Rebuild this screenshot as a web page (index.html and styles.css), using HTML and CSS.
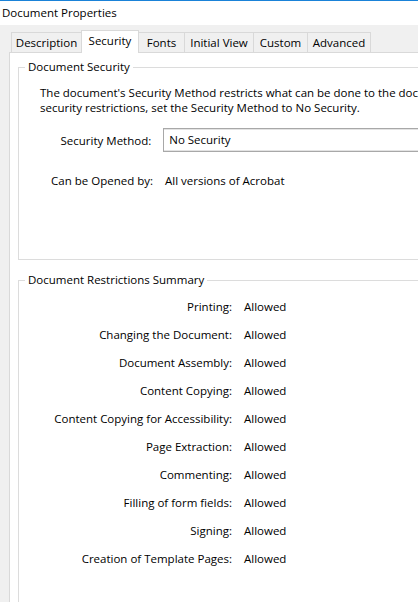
FILE: index.html
```html
<!DOCTYPE html>
<html>
<head>
<meta charset="utf-8">
<link rel="stylesheet" href="styles.css">
</head>
<body>
<div class="window">
  <div class="titlebar">Document Properties</div>
  <div class="tabs">
    <div class="tab t-desc">Description</div>
    <div class="tab t-sec active">Security</div>
    <div class="tab t-fonts">Fonts</div>
    <div class="tab t-init">Initial View</div>
    <div class="tab t-custom">Custom</div>
    <div class="tab t-adv">Advanced</div>
  </div>
  <div class="panel">
    <fieldset class="group group-security">
      <legend>Document Security</legend>
      <p class="desc">The document's Security Method restricts what can be done to the document. To remove<br>security restrictions, set the Security Method to No Security.</p>
      <div class="method-row">
        <span class="label">Security Method:</span>
        <div class="combo">No Security</div>
      </div>
      <div class="opened-row">
        <span class="label">Can be Opened by:</span>
        <span class="value">All versions of Acrobat</span>
      </div>
    </fieldset>
    <fieldset class="group group-summary">
      <legend>Document Restrictions Summary</legend>
      <div class="summary">
        <span class="s-label">Printing:</span><span class="s-value">Allowed</span>
        <span class="s-label">Changing the Document:</span><span class="s-value">Allowed</span>
        <span class="s-label">Document Assembly:</span><span class="s-value">Allowed</span>
        <span class="s-label">Content Copying:</span><span class="s-value">Allowed</span>
        <span class="s-label">Content Copying for Accessibility:</span><span class="s-value">Allowed</span>
        <span class="s-label">Page Extraction:</span><span class="s-value">Allowed</span>
        <span class="s-label">Commenting:</span><span class="s-value">Allowed</span>
        <span class="s-label">Filling of form fields:</span><span class="s-value">Allowed</span>
        <span class="s-label">Signing:</span><span class="s-value">Allowed</span>
        <span class="s-label">Creation of Template Pages:</span><span class="s-value">Allowed</span>
      </div>
    </fieldset>
  </div>
</div>
</body>
</html>
```

FILE: styles.css
```css
html, body {
  margin: 0;
  padding: 0;
}
body {
  width: 418px;
  height: 602px;
  overflow: hidden;
  background: #f0f0f0;
  font-family: "Open Sans", "Noto Sans", sans-serif;
  font-size: 11.5px;
  color: #000;
}
.window {
  width: 560px;
}
.titlebar {
  height: 24px;
  border-top: 1px solid #1a82d8;
  background: #fff;
  padding-left: 2px;
  line-height: 24px;
  white-space: nowrap;
}
.tabs {
  display: flex;
  height: 20px;
  margin-top: 7px;
  padding-left: 11px;
}
.tab {
  box-sizing: border-box;
  height: 20px;
  border: 1px solid #d9d9d9;
  border-bottom: none;
  margin-left: -1px;
  text-align: center;
  line-height: 19px;
  white-space: nowrap;
}
.tab:first-child { margin-left: 0; }
.t-desc { width: 71px; }
.t-sec { width: 58px; }
.t-fonts { width: 47px; }
.t-init { width: 70px; }
.t-custom { width: 55px; }
.t-adv { width: 64px; }
.tab.active {
  position: relative;
  z-index: 1;
  background: #fff;
  height: 23px;
  margin-top: -2px;
  line-height: 20px;
}
.panel {
  box-sizing: border-box;
  margin-left: 9px;
  height: 560px;
  background: #fff;
  border: 1px solid #d9d9d9;
  padding: 6px 0 0 8px;
}
.group {
  margin: 0;
  padding: 0;
  border: 1px solid #dcdcdc;
  min-width: 0;
}
.group legend {
  margin-left: 6px;
  padding: 0 3px;
  line-height: 16px;
}
.group-security {
  height: 201px;
  box-sizing: border-box;
}
.desc {
  margin: 10px 0 0 21px;
  line-height: 15px;
  white-space: nowrap;
}
.method-row {
  display: flex;
  align-items: center;
  margin-top: 13px;
}
.label {
  width: 134px;
  text-align: right;
  white-space: nowrap;
}
.combo {
  box-sizing: border-box;
  margin-left: 12px;
  width: 400px;
  height: 24px;
  border: 1px solid #a8a8a8;
  box-shadow: inset 0 1px 0 #e3e3e3, inset 0 -1px 0 #e3e3e3;
  padding-left: 5px;
  line-height: 22px;
}
.opened-row {
  display: flex;
  margin-top: 21px;
  line-height: 15px;
}
.opened-row .value {
  margin-left: 12px;
  white-space: nowrap;
}
.group-summary {
  margin-top: 12px;
  height: 400px;
}
.summary {
  display: grid;
  grid-template-columns: 213px auto;
  column-gap: 12px;
  grid-auto-rows: 28px;
  align-items: center;
  margin-top: 4px;
}
.s-label {
  text-align: right;
  white-space: nowrap;
}
.s-value {
  white-space: nowrap;
}
```
